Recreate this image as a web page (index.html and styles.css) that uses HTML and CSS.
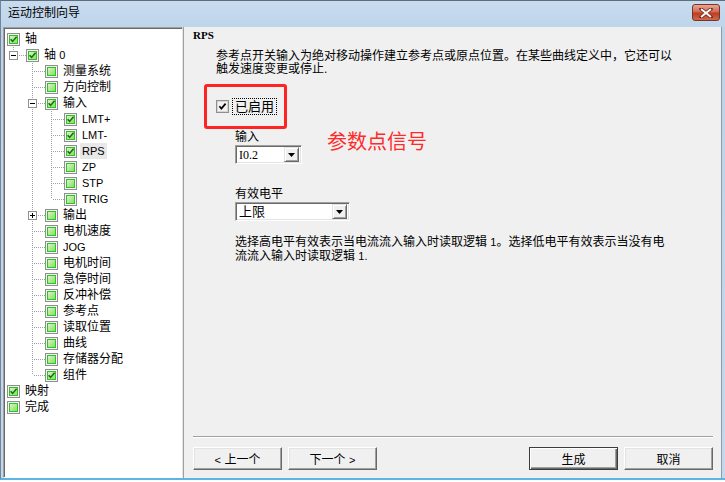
FILE: index.html
```html
<!DOCTYPE html>
<html lang="zh-CN">
<head>
    <meta charset="UTF-8">
    <title>运动控制向导</title>
    <link rel="stylesheet" href="styles.css">
</head>
<body>
    <svg class="sprites" width="0" height="0">
        <defs>
            <linearGradient id="green" x1="0" y1="0" x2="1" y2="1">
                <stop offset="0" stop-color="#dcf9cc"/>
                <stop offset="1" stop-color="#7fdc5c"/>
            </linearGradient>
            <symbol id="cb" viewBox="0 0 13 13">
                <rect x="0.5" y="0.5" width="12" height="12" fill="#f6f6f6" stroke="#8e8f8f"/>
                <rect x="2.5" y="2.5" width="8" height="8" fill="url(#green)" stroke="#34c024"/>
            </symbol>
            <symbol id="cbc" viewBox="0 0 13 13">
                <rect x="0.5" y="0.5" width="12" height="12" fill="#f6f6f6" stroke="#8e8f8f"/>
                <rect x="2.5" y="2.5" width="8" height="8" fill="url(#green)" stroke="#34c024"/>
                <path d="M3.6 6.2 L5.6 8.4 L9.6 3.8" fill="none" stroke="#1d6b1a" stroke-width="1.6"/>
            </symbol>
            <symbol id="minus" viewBox="0 0 9 9">
                <rect x="0.5" y="0.5" width="8" height="8" fill="#fff" stroke="#919191"/>
                <path d="M2 4.5h5" stroke="#000"/>
            </symbol>
            <symbol id="plus" viewBox="0 0 9 9">
                <rect x="0.5" y="0.5" width="8" height="8" fill="#fff" stroke="#919191"/>
                <path d="M2 4.5h5M4.5 2v5" stroke="#000"/>
            </symbol>
            <symbol id="arrow" viewBox="0 0 7 4">
                <path d="M0 0h7L3.5 4z" fill="#000"/>
            </symbol>
        </defs>
    </svg>

    <div class="window">
        <div class="titlebar">
            <span class="title">运动控制向导</span>
            <span class="close">
                <svg width="14" height="10" viewBox="0 0 14 10">
                    <path d="M2 1L12 9M12 1L2 9" stroke="#6b1f12" stroke-width="3.4" stroke-linecap="round"/>
                    <path d="M2 1L12 9M12 1L2 9" stroke="#fff" stroke-width="2"/>
                </svg>
            </span>
        </div>

        <div class="client">
            <div class="tree">
                <div class="node"><svg class="cb"><use href="#cbc"/></svg><span class="label">轴</span></div>
                <div class="node"><span class="cell elbow"><svg class="exp"><use href="#minus"/></svg></span><svg class="cb"><use href="#cbc"/></svg><span class="label">轴 <span class="lat">0</span></span></div>
                <div class="node"><span class="cell"></span><span class="cell tee"></span><svg class="cb"><use href="#cb"/></svg><span class="label">测量系统</span></div>
                <div class="node"><span class="cell"></span><span class="cell tee"></span><svg class="cb"><use href="#cb"/></svg><span class="label">方向控制</span></div>
                <div class="node"><span class="cell"></span><span class="cell tee"><svg class="exp"><use href="#minus"/></svg></span><svg class="cb"><use href="#cbc"/></svg><span class="label">输入</span></div>
                <div class="node"><span class="cell"></span><span class="cell pipe"></span><span class="cell tee"></span><svg class="cb"><use href="#cbc"/></svg><span class="label lat">LMT+</span></div>
                <div class="node"><span class="cell"></span><span class="cell pipe"></span><span class="cell tee"></span><svg class="cb"><use href="#cbc"/></svg><span class="label lat">LMT-</span></div>
                <div class="node"><span class="cell"></span><span class="cell pipe"></span><span class="cell tee"></span><svg class="cb"><use href="#cbc"/></svg><span class="label lat selected">RPS</span></div>
                <div class="node"><span class="cell"></span><span class="cell pipe"></span><span class="cell tee"></span><svg class="cb"><use href="#cb"/></svg><span class="label lat">ZP</span></div>
                <div class="node"><span class="cell"></span><span class="cell pipe"></span><span class="cell tee"></span><svg class="cb"><use href="#cb"/></svg><span class="label lat">STP</span></div>
                <div class="node"><span class="cell"></span><span class="cell pipe"></span><span class="cell elbow"></span><svg class="cb"><use href="#cb"/></svg><span class="label lat">TRIG</span></div>
                <div class="node"><span class="cell"></span><span class="cell tee"><svg class="exp"><use href="#plus"/></svg></span><svg class="cb"><use href="#cb"/></svg><span class="label">输出</span></div>
                <div class="node"><span class="cell"></span><span class="cell tee"></span><svg class="cb"><use href="#cb"/></svg><span class="label">电机速度</span></div>
                <div class="node"><span class="cell"></span><span class="cell tee"></span><svg class="cb"><use href="#cb"/></svg><span class="label lat">JOG</span></div>
                <div class="node"><span class="cell"></span><span class="cell tee"></span><svg class="cb"><use href="#cb"/></svg><span class="label">电机时间</span></div>
                <div class="node"><span class="cell"></span><span class="cell tee"></span><svg class="cb"><use href="#cb"/></svg><span class="label">急停时间</span></div>
                <div class="node"><span class="cell"></span><span class="cell tee"></span><svg class="cb"><use href="#cb"/></svg><span class="label">反冲补偿</span></div>
                <div class="node"><span class="cell"></span><span class="cell tee"></span><svg class="cb"><use href="#cb"/></svg><span class="label">参考点</span></div>
                <div class="node"><span class="cell"></span><span class="cell tee"></span><svg class="cb"><use href="#cb"/></svg><span class="label">读取位置</span></div>
                <div class="node"><span class="cell"></span><span class="cell tee"></span><svg class="cb"><use href="#cb"/></svg><span class="label">曲线</span></div>
                <div class="node"><span class="cell"></span><span class="cell tee"></span><svg class="cb"><use href="#cb"/></svg><span class="label">存储器分配</span></div>
                <div class="node"><span class="cell"></span><span class="cell elbow"></span><svg class="cb"><use href="#cbc"/></svg><span class="label">组件</span></div>
                <div class="node"><svg class="cb"><use href="#cbc"/></svg><span class="label">映射</span></div>
                <div class="node"><svg class="cb"><use href="#cb"/></svg><span class="label">完成</span></div>
            </div>

            <div class="page">
                <div class="heading">RPS</div>
                <p class="intro">参考点开关输入为绝对移动操作建立参考点或原点位置。在某些曲线定义中，它还可以<br>触发速度变更或停止.</p>

                <div class="marked">
                    <label class="check">
                        <svg class="box" width="13" height="13" viewBox="0 0 13 13">
                            <rect x="0.5" y="0.5" width="12" height="12" fill="#fff" stroke="#8e8f8f"/>
                            <rect x="1.5" y="1.5" width="10" height="10" fill="#f2f2f2" stroke="#d6d6d6"/>
                            <path d="M3.4 6.2 L5.4 8.6 L9.6 3.6" fill="none" stroke="#000" stroke-width="1.7"/>
                        </svg>
                        <span class="focus">已启用</span>
                    </label>
                </div>

                <div class="fields">
                    <div class="field">
                        <div class="field-label">输入</div>
                        <div class="combo small">
                            <span class="value serif">I0.2</span>
                            <span class="drop"><svg width="7" height="4"><use href="#arrow"/></svg></span>
                        </div>
                    </div>
                    <div class="note">参数点信号</div>
                </div>

                <div class="field level">
                    <div class="field-label">有效电平</div>
                    <div class="combo wide">
                        <span class="value">上限</span>
                        <span class="drop"><svg width="7" height="4"><use href="#arrow"/></svg></span>
                    </div>
                </div>

                <p class="hint">选择高电平有效表示当电流流入输入时读取逻辑 <span class="lat">1</span>。选择低电平有效表示当没有电<br>流流入输入时读取逻辑 <span class="lat">1.</span></p>

                <div class="footer">
                    <div class="separator"></div>
                    <div class="buttons">
                        <button class="btn"><span class="lat">&lt;</span> 上一个</button>
                        <button class="btn">下一个 <span class="lat">&gt;</span></button>
                        <span class="spacer"></span>
                        <button class="btn default">生成</button>
                        <button class="btn">取消</button>
                    </div>
                </div>
            </div>
        </div>
    </div>
</body>
</html>
```

FILE: styles.css
```css
body {
    margin: 0;
    background: #fff;
    font-family: "Liberation Sans", "Noto Sans CJK SC", sans-serif;
    font-size: 12px;
    color: #000;
}
.sprites {
    display: block;
    overflow: hidden;
}
.window {
    width: 725px;
    height: 480px;
    display: flex;
    flex-direction: column;
    box-sizing: border-box;
    background: linear-gradient(#c9dcef, #bcd3ea 30px, #c3d8ed);
    border-left: 1px solid #72869a;
    border-top: 1px solid #5d6d7d;
    border-bottom: 2px solid #5cb6e2;
}
.titlebar {
    height: 26px;
    display: flex;
    align-items: center;
    justify-content: space-between;
    padding: 0 5px 0 7px;
}
.title {
    line-height: 16px;
    margin-top: -2px;
}
.close {
    width: 26px;
    height: 15px;
    margin-top: -3px;
    border: 1px solid #7b3325;
    border-radius: 3px;
    background: linear-gradient(#e8a898, #d26a52 45%, #bf3c22 55%, #cf6a4c);
    display: flex;
    align-items: center;
    justify-content: center;
}
.client {
    flex: 1;
    display: flex;
    margin: 0 3px 0 2px;
    min-height: 0;
}

/* tree */
.tree {
    width: 175px;
    background: #fff;
    border-top: 1px solid #a0a0a0;
    border-left: 1px solid #a0a0a0;
    border-right: 1px solid #e3e3e3;
    border-bottom: 1px solid #fff;
    box-shadow: inset 1px 1px #696969, 1px 0 #a0a0a0;
    padding: 3px 0 0 3px;
    margin-right: 1px;
}
.node {
    display: flex;
    align-items: center;
    height: 16px;
    white-space: nowrap;
}
.cell {
    width: 19px;
    height: 16px;
    flex: none;
    display: flex;
    align-items: center;
}
.pipe {
    background: repeating-linear-gradient(to bottom, #a0a0a0 0 1px, transparent 1px 2px) 6px 0 / 1px 100% no-repeat;
}
.tee {
    background:
        repeating-linear-gradient(to bottom, #a0a0a0 0 1px, transparent 1px 2px) 6px 0 / 1px 100% no-repeat,
        repeating-linear-gradient(to right, #a0a0a0 0 1px, transparent 1px 2px) 8px 8px / 11px 1px no-repeat;
}
.elbow {
    background:
        repeating-linear-gradient(to bottom, #a0a0a0 0 1px, transparent 1px 2px) 6px 0 / 1px 8px no-repeat,
        repeating-linear-gradient(to right, #a0a0a0 0 1px, transparent 1px 2px) 8px 8px / 11px 1px no-repeat;
}
.exp {
    width: 9px;
    height: 9px;
    margin-left: 2px;
}
.cb {
    width: 13px;
    height: 13px;
    flex: none;
}
.label {
    margin-left: 3px;
    padding: 0 2px;
    line-height: 16px;
}
.lat {
    font-family: "Liberation Sans", sans-serif;
    font-size: 11px;
}
.selected {
    background: #e8e8e8;
}

/* page */
.page {
    flex: 1;
    display: flex;
    flex-direction: column;
    background: #f0f0f0;
    padding: 0 8px 8px 9px;
    border-right: 1px solid #8d9caa;
}
.heading {
    font-family: "Liberation Serif", serif;
    font-weight: bold;
    font-size: 11px;
    line-height: 16px;
}
.intro {
    margin: 7px 0 0 23px;
    line-height: 13px;
    white-space: nowrap;
}
.marked {
    width: 68px;
    height: 39px;
    margin: 8px 0 0 11px;
    border: 3px solid #ff2424;
    border-radius: 3px;
    display: flex;
    align-items: center;
    padding-left: 9px;
}
.check {
    display: flex;
    align-items: center;
    gap: 3px;
}
.focus {
    border: 1px dotted #000;
    padding: 0 2px;
    line-height: 15px;
    font-size: 13px;
}
.fields {
    display: flex;
    align-items: flex-start;
    gap: 25px;
}
.field {
    margin-left: 42px;
    display: flex;
    flex-direction: column;
}
.field-label {
    line-height: 14px;
    margin-top: 1px;
    margin-bottom: 1px;
}
.note {
    color: #ff2a2a;
    font-size: 20px;
    line-height: 22px;
    margin-top: 2px;
}
.level {
    margin-top: 22px;
}
.combo {
    height: 19px;
    box-sizing: border-box;
    background: #fff;
    border-top: 1px solid #a0a0a0;
    border-left: 1px solid #a0a0a0;
    border-right: 1px solid #fff;
    border-bottom: 1px solid #fff;
    box-shadow: inset 1px 1px #696969, inset -1px -1px #e3e3e3;
    display: flex;
    align-items: center;
    justify-content: space-between;
    padding: 2px 2px 2px 3px;
}
.combo.small {
    width: 67px;
}
.combo.wide {
    width: 115px;
}
.value {
    line-height: 14px;
    font-size: 13px;
}
.serif {
    font-family: "Liberation Serif", serif;
    font-size: 12px;
}
.drop {
    width: 15px;
    height: 15px;
    box-sizing: border-box;
    background: #f0f0f0;
    border: 1px solid;
    border-color: #e3e3e3 #696969 #696969 #e3e3e3;
    box-shadow: inset 1px 1px #fff, inset -1px -1px #a0a0a0;
    display: flex;
    align-items: center;
    justify-content: center;
}
.hint {
    margin: 14px 0 0 42px;
    line-height: 14px;
    white-space: nowrap;
}
.footer {
    margin-top: auto;
}
.separator {
    border-top: 1px solid #a0a0a0;
    border-bottom: 1px solid #fff;
}
.buttons {
    display: flex;
    gap: 6px;
    margin-top: 9px;
}
.spacer {
    flex: 1;
}
.btn {
    width: 89px;
    height: 23px;
    font: inherit;
    color: #000;
    background: #f0f0f0;
    border: 1px solid;
    border-color: #fff #696969 #696969 #fff;
    box-shadow: inset -1px -1px #a0a0a0, inset 1px 1px #e3e3e3;
    padding: 0;
}
.btn.default {
    border-color: #3c3c3c;
    box-shadow: inset 1px 1px #fff, inset -1px -1px #696969, inset -2px -2px #a0a0a0;
}
```
